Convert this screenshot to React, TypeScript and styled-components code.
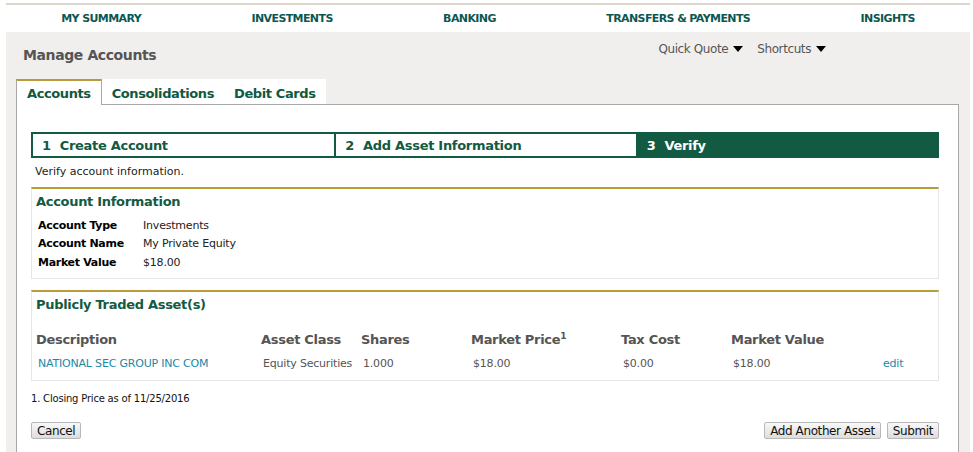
import styled, { createGlobalStyle } from 'styled-components';

const GlobalStyle = createGlobalStyle`
  body {
    margin: 0;
    background: #ffffff;
    font-family: 'DejaVu Sans', Verdana, sans-serif;
  }
`;

const navItems = ['MY SUMMARY', 'INVESTMENTS', 'BANKING', 'TRANSFERS & PAYMENTS', 'INSIGHTS'];

const steps = [
  { num: 1, label: 'Create Account' },
  { num: 2, label: 'Add Asset Information' },
  { num: 3, label: 'Verify' },
];

const accountRows = [
  { label: 'Account Type', value: 'Investments' },
  { label: 'Account Name', value: 'My Private Equity' },
  { label: 'Market Value', value: '$18.00' },
];

export default function App() {
  return (
    <>
      <GlobalStyle />
      <Page>
        <TopNav>
          {navItems.map((item) => (
            <NavLink key={item}>{item}</NavLink>
          ))}
        </TopNav>
        <Shell>
          <HeaderRow>
            <Title>Manage Accounts</Title>
            <Utilities>
              <Utility>
                Quick Quote <Caret />
              </Utility>
              <Utility>
                Shortcuts <Caret />
              </Utility>
            </Utilities>
          </HeaderRow>
          <Tabs>
            <Tab $active>Accounts</Tab>
            <Tab>Consolidations</Tab>
            <Tab>Debit Cards</Tab>
          </Tabs>
          <Panel>
            <Steps>
              {steps.map((s) => (
                <Step key={s.num} $current={s.num === 3}>
                  <span>{s.num}</span>
                  {s.label}
                </Step>
              ))}
            </Steps>
            <Intro>Verify account information.</Intro>

            <Box $h={92}>
              <BoxTitle>Account Information</BoxTitle>
              <InfoList>
                {accountRows.map((r) => (
                  <InfoRow key={r.label}>
                    <InfoLabel>{r.label}</InfoLabel>
                    <InfoValue>{r.value}</InfoValue>
                  </InfoRow>
                ))}
              </InfoList>
            </Box>

            <Box $h={91} $gap>
              <BoxTitle>Publicly Traded Asset(s)</BoxTitle>
              <AssetTable>
                <thead>
                  <tr>
                    <Th $w={225}>Description</Th>
                    <Th $w={100}>Asset Class</Th>
                    <Th $w={110}>Shares</Th>
                    <Th $w={150}>
                      Market Price<sup>1</sup>
                    </Th>
                    <Th $w={110}>Tax Cost</Th>
                    <Th $w={150}>Market Value</Th>
                    <Th />
                  </tr>
                </thead>
                <tbody>
                  <tr>
                    <Td>
                      <Link href="#">NATIONAL SEC GROUP INC COM</Link>
                    </Td>
                    <Td>Equity Securities</Td>
                    <Td>1.000</Td>
                    <Td>$18.00</Td>
                    <Td>$0.00</Td>
                    <Td>$18.00</Td>
                    <Td>
                      <Link href="#">edit</Link>
                    </Td>
                  </tr>
                </tbody>
              </AssetTable>
            </Box>

            <Footnote>1. Closing Price as of 11/25/2016</Footnote>

            <Actions>
              <Button>Cancel</Button>
              <RightActions>
                <Button>Add Another Asset</Button>
                <Button>Submit</Button>
              </RightActions>
            </Actions>
          </Panel>
        </Shell>
      </Page>
    </>
  );
}

const Page = styled.div`
  width: 964px;
  margin-left: 6px;
  border-top: 2px solid #dcd6cb;
  margin-top: 3px;
`;

const TopNav = styled.nav`
  display: flex;
  justify-content: space-around;
  align-items: center;
  height: 27px;
  background: #ffffff;
`;

const NavLink = styled.a`
  font-size: 11px;
  font-weight: bold;
  color: #0c5752;
  letter-spacing: -0.6px;
`;

const Shell = styled.div`
  background: #f1efed;
  padding: 0 11px 0 10px;
  height: 420px;
`;

const HeaderRow = styled.div`
  display: flex;
  justify-content: space-between;
  padding: 10px 0 0 7px;
  height: 37px;
  box-sizing: border-box;
`;

const Title = styled.h1`
  margin: 5px 0 0;
  font-size: 14px;
  font-weight: bold;
  color: #555555;
  letter-spacing: -0.4px;
`;

const Utilities = styled.div`
  display: flex;
  gap: 14px;
  margin-right: 133px;
`;

const Utility = styled.span`
  display: flex;
  align-items: center;
  gap: 5px;
  font-size: 12px;
  color: #555555;
  height: 14px;
  letter-spacing: -0.4px;
`;

const Caret = styled.i`
  width: 0;
  height: 0;
  border-left: 5px solid transparent;
  border-right: 5px solid transparent;
  border-top: 6px solid #000000;
`;

const Tabs = styled.div`
  display: flex;
  margin-top: 10px;
  height: 25px;
  width: max-content;
  background: #ffffff;
  position: relative;
  z-index: 1;
`;

const Tab = styled.div<{ $active?: boolean }>`
  display: flex;
  align-items: center;
  padding: 1px 10px 0;
  white-space: nowrap;
  font-size: 13px;
  font-weight: bold;
  color: #0f5a3f;
  letter-spacing: -0.4px;
  box-sizing: border-box;
  border-top: 2px solid ${(p) => (p.$active ? '#b99b3b' : 'transparent')};
  border-right: ${(p) => (p.$active ? '1px solid #a8a8a8' : 'none')};
  height: ${(p) => (p.$active ? '26px' : '25px')};
  ${(p) => (p.$active ? 'border-left: 1px solid #a8a8a8;' : '')}
  background: #ffffff;
`;

const Panel = styled.div`
  background: #ffffff;
  border: 1px solid #a8a8a8;
  border-bottom: none;
  height: 348px;
  padding: 27px 19px 0 14px;
  box-sizing: border-box;
`;

const Steps = styled.div`
  display: grid;
  grid-template-columns: 1fr 1fr 1fr;
  border: 2px solid #135a43;
  height: 26px;
  box-sizing: border-box;
`;

const Step = styled.div<{ $current?: boolean }>`
  display: flex;
  align-items: center;
  gap: 9px;
  padding-left: 9px;
  font-size: 13px;
  font-weight: bold;
  letter-spacing: -0.3px;
  color: ${(p) => (p.$current ? '#ffffff' : '#135a43')};
  background: ${(p) => (p.$current ? '#135a43' : '#ffffff')};
  & + & {
    border-left: 2px solid #135a43;
  }
`;

const Intro = styled.p`
  margin: 7px 0 0 4px;
  font-size: 11px;
  color: #222222;
  height: 15px;
`;

const Box = styled.section<{ $gap?: boolean; $h: number }>`
  margin-top: ${(p) => (p.$gap ? '11px' : '7px')};
  border: 1px solid #e6e6e6;
  border-top: 2px solid #b99b3b;
  padding: 5px 4px 0;
  height: ${(p) => p.$h}px;
  box-sizing: border-box;
`;

const BoxTitle = styled.h2`
  margin: 0;
  font-size: 13px;
  font-weight: bold;
  color: #135a43;
  letter-spacing: -0.3px;
`;

const InfoList = styled.div`
  display: flex;
  flex-direction: column;
  margin-top: 7px;
  padding-left: 2px;
`;

const InfoRow = styled.div`
  display: flex;
  height: 18.5px;
  align-items: center;
  font-size: 11px;
`;

const InfoLabel = styled.span`
  width: 105px;
  font-weight: bold;
  color: #000000;
  letter-spacing: -0.3px;
`;

const InfoValue = styled.span`
  color: #222222;
  letter-spacing: -0.2px;
`;

const AssetTable = styled.table`
  border-collapse: collapse;
  margin-top: 17px;
  width: 100%;
`;

const Th = styled.th<{ $w?: number }>`
  text-align: left;
  padding: 0;
  width: ${(p) => (p.$w ? `${p.$w}px` : 'auto')};
  font-size: 13px;
  font-weight: bold;
  color: #555555;
  letter-spacing: -0.3px;
  height: 20px;
  sup {
    font-size: 9px;
    vertical-align: 5px;
    line-height: 0;
  }
`;

const Td = styled.td`
  padding: 8px 0 0 2px;
  font-size: 11px;
  color: #555555;
  letter-spacing: -0.2px;
  white-space: nowrap;
`;

const Link = styled.a`
  color: #1a8aa8;
  text-decoration: none;
`;

const Footnote = styled.p`
  margin: 12px 0 0;
  font-size: 10px;
  color: #111111;
  letter-spacing: -0.2px;
`;

const Actions = styled.div`
  display: flex;
  justify-content: space-between;
  margin-top: 18px;
`;

const RightActions = styled.div`
  display: flex;
  gap: 6px;
`;

const Button = styled.button`
  font-family: 'DejaVu Sans', Verdana, sans-serif;
  font-size: 12px;
  letter-spacing: -0.4px;
  color: #111111;
  height: 17px;
  padding: 0 5px;
  border: 1px solid #b8b8b8;
  border-radius: 2px;
  background: linear-gradient(#f8f8f8, #dddddd);
  line-height: 1;
`;
